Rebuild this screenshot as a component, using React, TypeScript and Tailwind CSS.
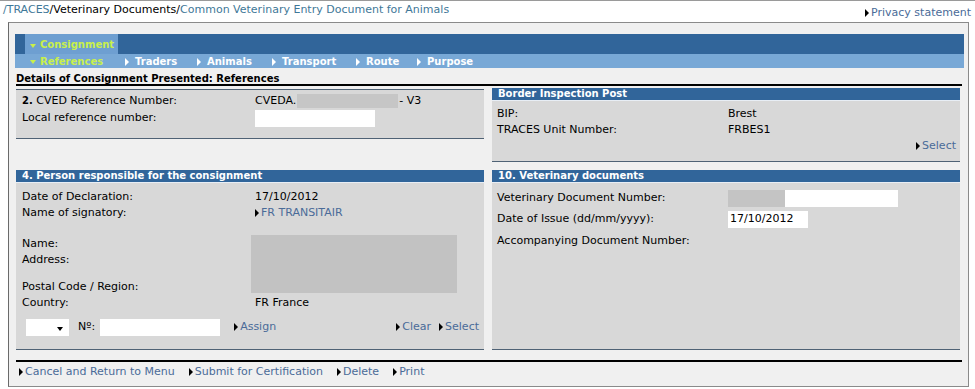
import React from "react";

const Arrow = () => (
  <span className="inline-block w-0 h-0 border-y-[4px] border-y-transparent border-l-[4px] border-l-black mr-[2px]" />
);

const Link = ({ children, className = "" }: { children: React.ReactNode; className?: string }) => (
  <span className={"inline-flex items-center text-[#4a6b98] " + className}>
    <Arrow />
    {children}
  </span>
);

const Row = ({ label, children, h = "h-[16px]", valueX = "w-[233px]" }: { label?: React.ReactNode; children?: React.ReactNode; h?: string; valueX?: string }) => (
  <div className={"flex items-center " + h}>
    <div className={"shrink-0 " + valueX}>{label}</div>
    <div className="flex items-center">{children}</div>
  </div>
);

const Header = ({ children }: { children: React.ReactNode }) => (
  <div className="h-[13px] bg-[#31659a] text-white font-bold text-[10px] leading-[12px] pl-[6px] border-b border-b-[#e8eef5]">{children}</div>
);

const Down = ({ c = "border-t-[#c9f04a]" }: { c?: string }) => (
  <span className={"inline-block w-0 h-0 border-x-[3px] border-x-transparent border-t-[4px] " + c} />
);
const Right = () => (
  <span className="inline-block w-0 h-0 border-y-[4px] border-y-transparent border-l-[4px] border-l-white" />
);

const SubItem = ({ w, children, active = false }: { w?: string; children: React.ReactNode; active?: boolean }) => (
  <div className={"shrink-0 flex items-center " + (w || "") + (active ? " text-[#c9f04a]" : " text-white")}>
    <span className="w-[10px] flex items-center">{active ? <Down /> : <Right />}</span>
    {children}
  </div>
);

export default function App() {
  return (
    <div className="w-[975px] h-[389px] bg-white overflow-hidden text-[11px] leading-[14px] text-black font-['DejaVu_Sans',Verdana,sans-serif]">
      <div className="border-t border-t-[#9a9a9a] flex justify-between items-start h-[22px]">
        <div className="pt-[2px] pl-[3px]">
          <span className="text-[#3f7898]">/TRACES</span>
          <span>/Veterinary Documents/</span>
          <span className="text-[#3f7898]">Common Veterinary Entry Document for Animals</span>
        </div>
        <div className="pt-[5px] pr-[4px]">
          <Link className="text-[#3f6a8c]">Privacy statement</Link>
        </div>
      </div>

      <div className="ml-[8px] w-[961px] h-[365px] border border-[#8a8a8a] border-l-[#6a6a6a] bg-[#f0f0f0] pt-[11px] pl-[6px] pr-[4px]">
        {/* tab bars */}
        <div className="h-[20px] bg-[#31659a] flex">
          <div className="ml-[10px] w-[93px] h-[20px] bg-[#6e9fd1] text-[#c9f04a] font-bold text-[10px] flex items-end pb-[2px] pl-[5px]">
            <span className="w-[10px] flex items-center h-[12px]"><Down /></span>Consignment
          </div>
        </div>
        <div className="h-[14px] bg-[#78a8d6] flex items-center font-bold text-[10px] leading-[14px] pl-[15px] pt-[1px]">
          <SubItem w="w-[95px]" active>References</SubItem>
          <SubItem w="w-[72px]">Traders</SubItem>
          <SubItem w="w-[75px]">Animals</SubItem>
          <SubItem w="w-[84px]">Transport</SubItem>
          <SubItem w="w-[61px]">Route</SubItem>
          <SubItem>Purpose</SubItem>
        </div>
        <div className="ml-[1px] mr-[2px] h-[18px] border-b-[2px] border-b-black font-bold text-[10px] leading-[14px] pt-[4px]">
          Details of Consignment Presented: References
        </div>

        {/* panels */}
        <div className="grid grid-cols-[468px_468px] gap-x-[8px] gap-y-[1px] ml-[1px] mt-[2px]">
          {/* top-left */}
          <div className="h-[81px]">
            <div className="mt-[1px] h-[50px] bg-[#d8d8d8] border-y border-y-[#4f6275] pl-[6px] pt-[3px]">
              <Row label={<><b className="text-[10px]">2.</b> CVED Reference Number:</>}>
                CVEDA.<span className="inline-block w-[101px] h-[14px] bg-[#c6c6c6] mx-[1px]" />- V3
              </Row>
              <Row label="Local reference number:" h="h-[18px]">
                <span className="inline-block w-[120px] h-[17px] bg-white" />
              </Row>
            </div>
          </div>
          {/* top-right */}
          <div className="h-[81px]">
            <Header>Border Inspection Post</Header>
            <div className="h-[61px] bg-[#d8d8d8] border-b border-b-[#4f6275] pl-[5px] pr-[4px] pt-[5px]">
              <Row label="BIP:" valueX="w-[231px]">Brest</Row>
              <Row label="TRACES Unit Number:" valueX="w-[231px]">FRBES1</Row>
              <div className="flex justify-end h-[16px] items-center"><Link>Select</Link></div>
            </div>
          </div>

          {/* bottom-left */}
          <div>
            <Header>4. Person responsible for the consignment</Header>
            <div className="h-[167px] bg-[#d8d8d8] border-b border-b-[#4f6275] pl-[6px] pr-[5px] pt-[6px]">
              <Row label="Date of Declaration:">17/10/2012</Row>
              <Row label="Name of signatory:"><Link>FR TRANSITAIR</Link></Row>
              <div className="flex h-[74px]">
                <div className="w-[229px] pt-[16px]">
                  <div className="h-[16px]">Name:</div>
                  <div className="h-[16px]">Address:</div>
                  <div className="h-[16px] mt-[11px]">Postal Code / Region:</div>
                </div>
                <div className="mt-[14px] w-[206px] h-[58px] bg-[#c2c2c2]" />
              </div>
              <Row label="Country:">FR France</Row>
              <div className="flex items-center h-[22px] mt-[5px]">
                <div className="ml-[4px] w-[43px] h-[17px] bg-white flex items-center justify-end pr-[6px]">
                  <span className="inline-block w-0 h-0 border-x-[3px] border-x-transparent border-t-[4px] border-t-black mt-[3px]" />
                </div>
                <span className="ml-[9px]">Nº:</span>
                <span className="ml-[5px] w-[120px] h-[17px] bg-white inline-block" />
                <Link className="ml-[14px]">Assign</Link>
                <div className="ml-auto flex gap-[8px]">
                  <Link>Clear</Link>
                  <Link>Select</Link>
                </div>
              </div>
            </div>
          </div>
          {/* bottom-right */}
          <div>
            <Header>10. Veterinary documents</Header>
            <div className="h-[167px] bg-[#d8d8d8] border-b border-b-[#4f6275] pl-[5px] pt-[5px]">
              <Row label="Veterinary Document Number:" valueX="w-[231px]" h="h-[20px]">
                <span className="inline-flex w-[170px] h-[17px] bg-white">
                  <span className="w-[57px] h-[17px] bg-[#c4c4c4]" />
                </span>
              </Row>
              <Row label="Date of Issue (dd/mm/yyyy):" valueX="w-[231px]" h="h-[22px]">
                <span className="inline-flex items-center w-[80px] h-[17px] bg-white pl-[2px]">17/10/2012</span>
              </Row>
              <Row label="Accompanying Document Number:" valueX="w-[231px]" h="h-[22px]" />
            </div>
          </div>
        </div>

        <div className="mt-[10px] mr-[2px] ml-[1px] border-t-[2px] border-t-black pt-[2px] pl-[3px] flex gap-[14px] h-[20px] items-center">
          <Link>Cancel and Return to Menu</Link>
          <Link>Submit for Certification</Link>
          <Link>Delete</Link>
          <Link>Print</Link>
        </div>
      </div>
    </div>
  );
}
